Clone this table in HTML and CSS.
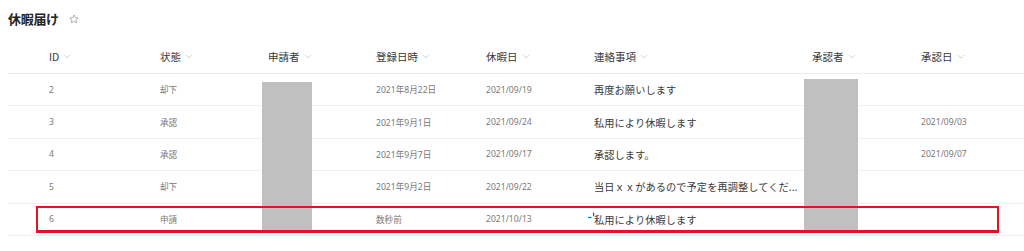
FILE: index.html
```html
<!DOCTYPE html>
<html lang="ja">
<head>
<meta charset="utf-8">
<link rel="stylesheet" href="styles.css">
</head>
<body>
<div class="page">
  <div class="title-bar">
    <h1 class="title">休暇届け</h1>
    <svg class="star" width="10" height="10" viewBox="0 0 20 20"><path d="M10 1.8l2.5 5.4 5.9.7-4.4 4 1.2 5.8L10 14.8l-5.2 2.9 1.2-5.8-4.4-4 5.9-.7z" fill="none" stroke="#8a8886" stroke-width="1.3" stroke-linejoin="round"/></svg>
  </div>

  <div class="list">
    <div class="row head">
      <div class="cell"><span>ID</span><svg class="chev" viewBox="0 0 10 6"><path d="M1 1l4 4 4-4" fill="none" stroke="#c8c6c4" stroke-width="1"/></svg></div>
      <div class="cell"><span>状態</span><svg class="chev" viewBox="0 0 10 6"><path d="M1 1l4 4 4-4" fill="none" stroke="#c8c6c4" stroke-width="1"/></svg></div>
      <div class="cell"><span>申請者</span><svg class="chev" viewBox="0 0 10 6"><path d="M1 1l4 4 4-4" fill="none" stroke="#c8c6c4" stroke-width="1"/></svg></div>
      <div class="cell"><span>登録日時</span><svg class="chev" viewBox="0 0 10 6"><path d="M1 1l4 4 4-4" fill="none" stroke="#c8c6c4" stroke-width="1"/></svg></div>
      <div class="cell"><span>休暇日</span><svg class="chev" viewBox="0 0 10 6"><path d="M1 1l4 4 4-4" fill="none" stroke="#c8c6c4" stroke-width="1"/></svg></div>
      <div class="cell"><span>連絡事項</span><svg class="chev" viewBox="0 0 10 6"><path d="M1 1l4 4 4-4" fill="none" stroke="#c8c6c4" stroke-width="1"/></svg></div>
      <div class="cell"><span>承認者</span><svg class="chev" viewBox="0 0 10 6"><path d="M1 1l4 4 4-4" fill="none" stroke="#c8c6c4" stroke-width="1"/></svg></div>
      <div class="cell"><span>承認日</span><svg class="chev" viewBox="0 0 10 6"><path d="M1 1l4 4 4-4" fill="none" stroke="#c8c6c4" stroke-width="1"/></svg></div>
    </div>

    <div class="row">
      <div class="cell sm">2</div>
      <div class="cell sm">却下</div>
      <div class="cell"></div>
      <div class="cell sm">2021年8月22日</div>
      <div class="cell sm">2021/09/19</div>
      <div class="cell note">再度お願いします</div>
      <div class="cell"></div>
      <div class="cell sm"></div>
    </div>
    <div class="row">
      <div class="cell sm">3</div>
      <div class="cell sm">承認</div>
      <div class="cell"></div>
      <div class="cell sm">2021年9月1日</div>
      <div class="cell sm">2021/09/24</div>
      <div class="cell note">私用により休暇します</div>
      <div class="cell"></div>
      <div class="cell sm">2021/09/03</div>
    </div>
    <div class="row">
      <div class="cell sm">4</div>
      <div class="cell sm">承認</div>
      <div class="cell"></div>
      <div class="cell sm">2021年9月7日</div>
      <div class="cell sm">2021/09/17</div>
      <div class="cell note">承認します。</div>
      <div class="cell"></div>
      <div class="cell sm">2021/09/07</div>
    </div>
    <div class="row">
      <div class="cell sm">5</div>
      <div class="cell sm">却下</div>
      <div class="cell"></div>
      <div class="cell sm">2021年9月2日</div>
      <div class="cell sm">2021/09/22</div>
      <div class="cell note">当日ｘｘがあるので予定を再調整してくだ...</div>
      <div class="cell"></div>
      <div class="cell sm"></div>
    </div>
    <div class="row">
      <div class="cell sm">6</div>
      <div class="cell sm">申請</div>
      <div class="cell"></div>
      <div class="cell sm">数秒前</div>
      <div class="cell sm">2021/10/13</div>
      <div class="cell note spin-cell"><svg class="spinner" width="10" height="8" viewBox="0 0 10 8"><path d="M1 5.5h3.5" stroke="#0078d4" stroke-width="1.2"/><path d="M6.5 0.5v3.5" stroke="#0078d4" stroke-width="1.2"/><path d="M8.5 1.5l-1.2 1.2" stroke="#8cbfea" stroke-width="1"/></svg>私用により休暇します</div>
      <div class="cell"></div>
      <div class="cell sm"></div>
    </div>

    <div class="mask mask-a"></div>
    <div class="mask mask-b"></div>
    <div class="highlight"></div>
  </div>
</div>
</body>
</html>
```

FILE: styles.css
```css
html, body {
  margin: 0;
  padding: 0;
  background: #ffffff;
}

body {
  font-family: "Noto Sans", "Noto Sans CJK JP", sans-serif;
  color: #323130;
  width: 1024px;
  height: 251px;
  overflow: hidden;
}

.page {
  padding: 10px 0 0 8px;
}

.title-bar {
  display: flex;
  align-items: center;
  gap: 10px;
  height: 17px;
}

.title {
  margin: 0;
  font-size: 13px;
  font-weight: 700;
  line-height: 17px;
  color: #252423;
  font-family: "Noto Sans CJK JP", sans-serif;
  letter-spacing: -0.3px;
}

.star {
  display: block;
  margin-top: 1px;
}

.list {
  position: relative;
  margin-top: 13px;
}

.row {
  display: grid;
  grid-template-columns: 41px 111px 108px 108px 110px 108px 218px 109px 1fr;
  height: 32.4px;
  box-sizing: border-box;
  border-bottom: 1px solid #f1f0ef;
  align-items: center;
}

.row::before {
  content: "";
}

.row.head {
  height: 34px;
  border-bottom: 1px solid #edebe9;
}

.cell {
  display: flex;
  align-items: center;
  white-space: nowrap;
  min-width: 0;
}

.head .cell {
  font-size: 10.5px;
  color: #3b3a39;
  font-family: "Noto Sans CJK JP", sans-serif;
  gap: 4px;
  padding-bottom: 1px;
}

.chev {
  width: 8px;
  height: 5px;
  display: block;
}

.sm {
  font-size: 8.6px;
  color: #7a7877;
  font-family: "Noto Sans", "Noto Sans CJK JP", sans-serif;
}

.note {
  font-size: 10.2px;
  color: #3b3a39;
  font-family: "Noto Sans CJK JP", sans-serif;
  letter-spacing: 0.1px;
}

.spin-cell {
  position: relative;
}

.spinner {
  position: absolute;
  left: -7px;
  top: 0;
}

.mask {
  position: absolute;
  background: #c0c0c0;
}

.mask-a {
  left: 254px;
  top: 42px;
  width: 50px;
  height: 149px;
}

.mask-b {
  left: 796px;
  top: 39px;
  width: 54px;
  height: 151px;
}

.highlight {
  position: absolute;
  left: 28px;
  top: 166px;
  width: 963px;
  height: 27px;
  box-sizing: border-box;
  border: 2px solid #e81123;
  border-bottom-width: 3px;
}
```
